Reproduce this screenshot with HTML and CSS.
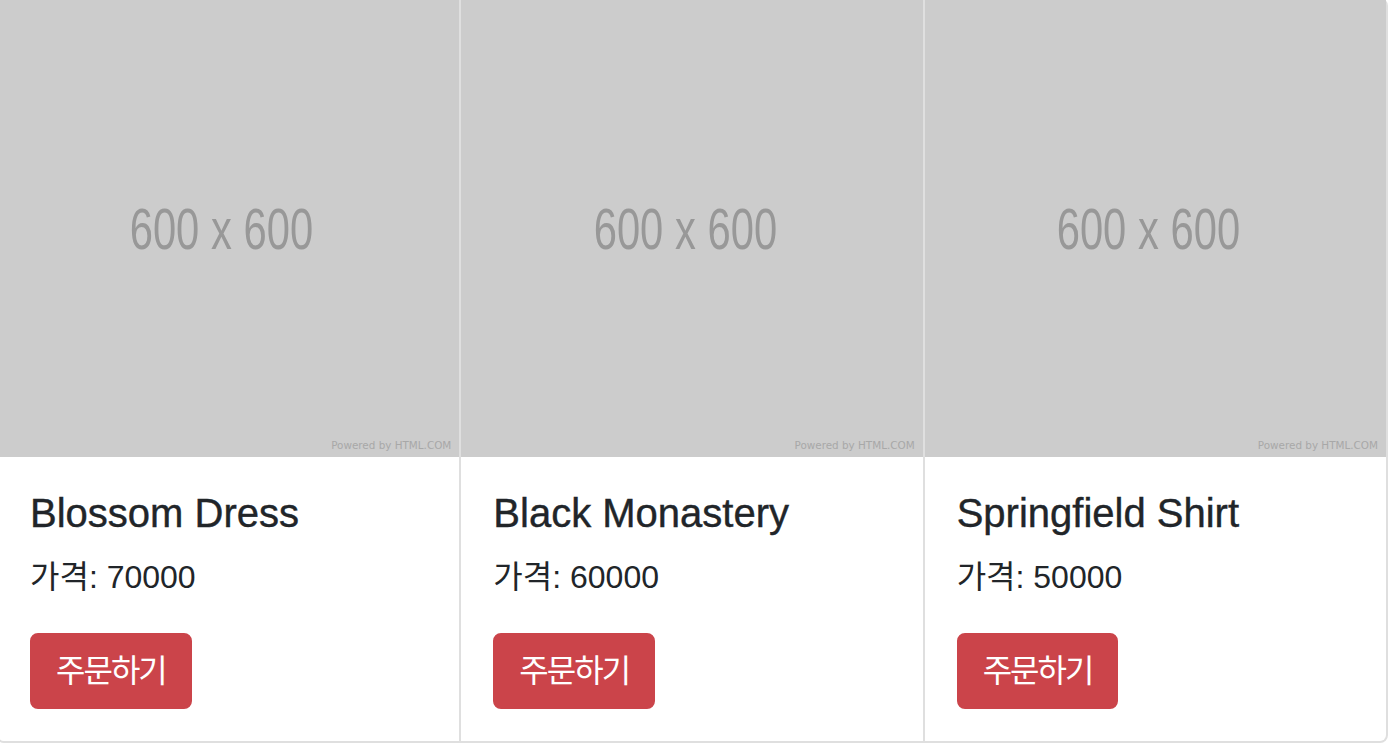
FILE: index.html
```html
<!DOCTYPE html>
<html lang="ko">
<head>
  <meta charset="UTF-8" />
  <meta name="viewport" content="width=device-width, initial-scale=1.0"/>
  <title>상품 목록</title>
  <link rel="stylesheet" href="styles.css">
</head>
<body>

  <div class="card-group">
    <!-- 상품 1 -->
    <div class="card">
      <div class="card-img">
        <span class="img-size">600 x 600</span>
        <span class="img-credit">Powered by HTML.COM</span>
      </div>
      <div class="card-body">
        <h5 class="card-title">Blossom Dress</h5>
        <p class="card-text">가격: 70000</p>
        <button class="btn btn-danger" type="button">주문하기</button>
      </div>
    </div>

    <!-- 상품 2 -->
    <div class="card">
      <div class="card-img">
        <span class="img-size">600 x 600</span>
        <span class="img-credit">Powered by HTML.COM</span>
      </div>
      <div class="card-body">
        <h5 class="card-title">Black Monastery</h5>
        <p class="card-text">가격: 60000</p>
        <button class="btn btn-danger" type="button">주문하기</button>
      </div>
    </div>

    <!-- 상품 3 -->
    <div class="card">
      <div class="card-img">
        <span class="img-size">600 x 600</span>
        <span class="img-credit">Powered by HTML.COM</span>
      </div>
      <div class="card-body">
        <h5 class="card-title">Springfield Shirt</h5>
        <p class="card-text">가격: 50000</p>
        <button class="btn btn-danger" type="button">주문하기</button>
      </div>
    </div>
  </div>

</body>
</html>
```

FILE: styles.css
```css
body {
  margin: 0;
  font-family: "Liberation Sans", "Noto Sans CJK KR", sans-serif;
  color: #212529;
  background-color: #fff;
  overflow: hidden;
}

.card-group {
  display: flex;
  width: 1392px;
  margin: -2px 0 0 -4px;
}

.card {
  flex: 1 1 0;
  min-width: 0;
  display: flex;
  flex-direction: column;
  border: 2px solid #dfdfdf;
  border-left: 0;
}

.card:first-child {
  border-left: 2px solid #dfdfdf;
  border-radius: 8px 0 0 8px;
}

.card:last-child {
  border-radius: 0 8px 8px 0;
}

.card-img {
  position: relative;
  height: 457px;
  background-color: #ccc;
  display: flex;
  justify-content: center;
  align-items: center;
  overflow: hidden;
}

.img-size {
  font-size: 58px;
  color: #989898;
  white-space: nowrap;
  transform: translateX(-7px) scaleX(0.72);
}

.img-credit {
  position: absolute;
  right: 8px;
  bottom: 6px;
  font-family: "DejaVu Sans", sans-serif;
  font-size: 10.4px;
  color: #a8a8a8;
}

.card-body {
  padding: 32px;
}

.card-title {
  margin: 0 0 16px;
  font-size: 40px;
  font-weight: 500;
  line-height: 1.2;
  -webkit-text-stroke: 0.4px #212529;
}

.card-text {
  margin: 0 0 32px;
  font-size: 32px;
  line-height: 48px;
}

.btn {
  display: inline-block;
  padding: 12px 24px;
  font-family: "Liberation Sans", "Noto Sans CJK KR", sans-serif;
  font-size: 32px;
  line-height: 48px;
  letter-spacing: -2px;
  color: #fff;
  border: 2px solid transparent;
  border-radius: 8px;
  cursor: pointer;
}

.btn-danger {
  background-color: #cb444a;
  border-color: #cb444a;
}
```
